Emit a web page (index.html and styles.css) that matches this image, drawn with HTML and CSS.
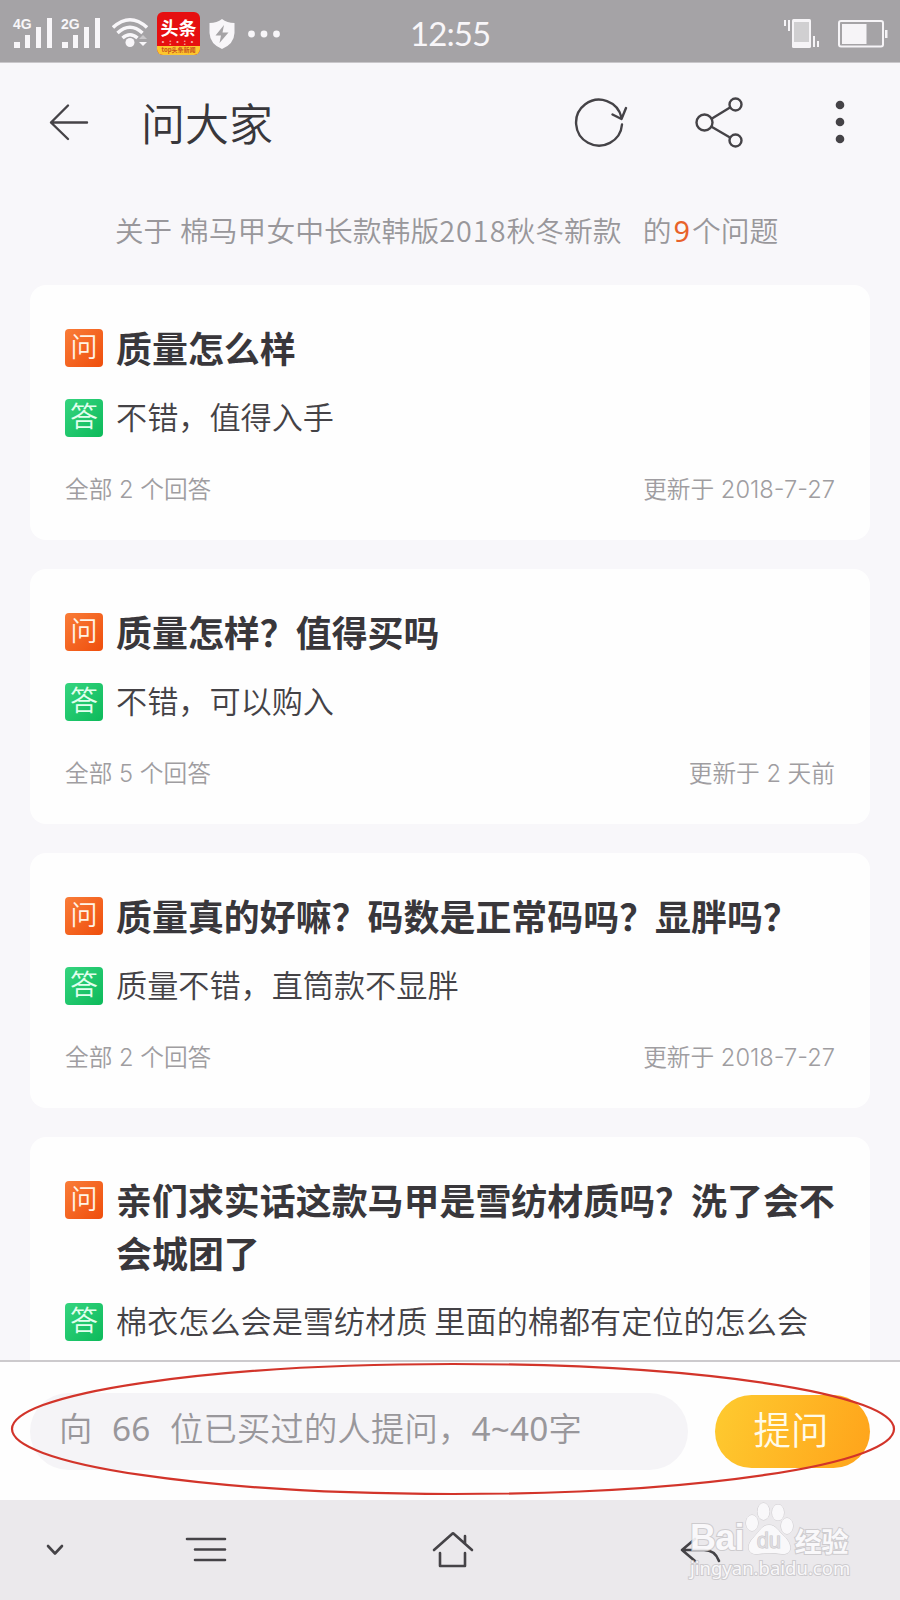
FILE: index.html
```html
<!DOCTYPE html>
<html lang="zh">
<head>
    <meta charset="UTF-8">
    <meta name="viewport" content="width=device-width, initial-scale=1.0">
    <title>问大家</title>
    <link rel="stylesheet" href="styles.css">
</head>
<body>
    <div class="phone">
        <!-- 状态栏 -->
        <div class="status-bar">
            <div class="status-left">
                <svg class="signal" width="40" height="34" viewBox="0 0 40 34">
                    <text class="net-type" x="0" y="12">4G</text>
                    <path d="M1 25h6v6H1zM12 18h5v13h-5zM23 10h5v21h-5zM34 1h5v30h-5z"/>
                </svg>
                <svg class="signal" width="40" height="34" viewBox="0 0 40 34">
                    <text class="net-type" x="0" y="12">2G</text>
                    <path d="M1 25h6v6H1zM12 18h5v13h-5zM23 10h5v21h-5zM34 1h5v30h-5z"/>
                </svg>
                <svg class="wifi" width="36" height="34" viewBox="0 0 36 34">
                    <path d="M1 10.500Q18-5 35 10.500M5.500 16Q18 4.500 30.500 16M10.500 21Q18 14.500 25.500 21"/>
                    <circle cx="18" cy="25.500" r="4.500"/>
                    <path class="wifi-up" d="M27 22l4-4 4 4z"/>
                    <path class="wifi-down" d="M27 25h8l-4 4z"/>
                </svg>
                <div class="app-icon">
                    <div class="app-name">头条</div>
                    <div class="app-dots">·:·:·</div>
                    <div class="app-ribbon">top头条新闻</div>
                </div>
                <svg class="shield" width="26" height="32" viewBox="0 0 26 32">
                    <path class="shield-body" d="M13 1Q18 5 25.500 5V15Q25 26 13 31Q1 26 .5 15V5Q8 5 13 1z"/>
                    <path class="shield-bolt" d="M15 7L6.500 17.500H12L10.500 25L19.500 14.500H13.500z"/>
                </svg>
                <svg class="more" width="32" height="8" viewBox="0 0 32 8">
                    <circle cx="3.500" cy="4" r="3.400"/>
                    <circle cx="16" cy="4" r="3.400"/>
                    <circle cx="28.500" cy="4" r="3.400"/>
                </svg>
            </div>
            <div class="time">12:55</div>
            <div class="status-right">
                <svg width="38" height="30" viewBox="0 0 38 30">
                    <path fill="#f6f4f7" d="M1 1h2v6H1zM5 1h2v11H5zM30 17h2v11h-2zM34 22h2v6h-2z"/>
                    <rect x="9" y="0" width="19" height="29" rx="1.500" fill="#f6f4f7"/>
                    <rect x="11" y="3" width="15" height="20" fill="#d0cfd1"/>
                </svg>
                <svg width="50" height="28" viewBox="0 0 50 28">
                    <rect x="1" y="1" width="44" height="25.500" rx="2" fill="none" stroke="#f6f4f7" stroke-width="2"/>
                    <path fill="#f6f4f7" d="M4 4h24.500v20H4zM47 10h2.500v8H47z"/>
                </svg>
            </div>
        </div>

        <!-- 顶部导航 -->
        <div class="header">
            <svg class="back" width="40" height="40" viewBox="0 0 40 40">
                <path d="M19 3.500L2 20.500L19 37M2 20.500H38"/>
            </svg>
            <h1>问大家</h1>
            <svg class="refresh" width="54" height="52" viewBox="0 0 54 52">
                <path d="M48 28.500A23 23 0 1 1 47.500 21.500M38.500 18.500L47.500 23L52 12"/>
            </svg>
            <svg class="share" width="48" height="52" viewBox="0 0 48 52">
                <circle cx="9.500" cy="26.500" r="8"/>
                <circle cx="40.500" cy="8.500" r="6"/>
                <circle cx="40.500" cy="44.500" r="6"/>
                <path d="M17 22.500L35 11.500M17 31L35 41.500"/>
            </svg>
            <svg class="menu" width="10" height="44" viewBox="0 0 10 44">
                <circle cx="5" cy="5" r="4.300"/>
                <circle cx="5" cy="22" r="4.300"/>
                <circle cx="5" cy="39" r="4.300"/>
            </svg>
        </div>

        <!-- 问题列表 -->
        <div class="content">
            <div class="summary">
                <span class="about">关于</span>
                <span class="product">棉马甲女中长款韩版<span class="year">2018</span>秋冬新款</span>
                <span class="total">的<b>9</b>个问题</span>
            </div>

            <div class="card">
                <div class="question"><span class="tag ask">问</span><h2>质量怎么样</h2></div>
                <div class="answer"><span class="tag reply">答</span><p>不错，值得入手</p></div>
                <div class="meta"><span>全部 2 个回答</span><span>更新于 2018-7-27</span></div>
            </div>

            <div class="card">
                <div class="question"><span class="tag ask">问</span><h2>质量怎样？值得买吗</h2></div>
                <div class="answer"><span class="tag reply">答</span><p>不错，可以购入</p></div>
                <div class="meta"><span>全部 5 个回答</span><span>更新于 2 天前</span></div>
            </div>

            <div class="card">
                <div class="question"><span class="tag ask">问</span><h2>质量真的好嘛？码数是正常码吗？显胖吗？</h2></div>
                <div class="answer"><span class="tag reply">答</span><p>质量不错，直筒款不显胖</p></div>
                <div class="meta"><span>全部 2 个回答</span><span>更新于 2018-7-27</span></div>
            </div>

            <div class="card">
                <div class="question"><span class="tag ask">问</span><h2>亲们求实话这款马甲是雪纺材质吗？洗了会不会城团了</h2></div>
                <div class="answer"><span class="tag reply">答</span><p>棉衣怎么会是雪纺材质 里面的棉都有定位的怎么会</p></div>
            </div>
        </div>

        <!-- 提问栏 -->
        <div class="ask-bar">
            <div class="ask-input">向<span class="num buyers">66</span>位已买过的人提问，<span class="num">4~40</span>字</div>
            <button class="ask-btn">提问</button>
            <svg class="highlight" width="900" height="140" viewBox="0 0 900 140">
                <ellipse cx="453" cy="69" rx="441" ry="65"/>
            </svg>
        </div>

        <!-- 系统导航键 -->
        <div class="nav-bar">
            <svg class="nav-down" width="18" height="12" viewBox="0 0 18 12">
                <path d="M2 2L9 9.500L16 2"/>
            </svg>
            <svg class="nav-menu" width="42" height="28" viewBox="0 0 42 28">
                <path d="M2 3H40M10 13.500H40M10 24H40"/>
            </svg>
            <svg class="nav-home" width="44" height="40" viewBox="0 0 44 40">
                <path d="M3 20L21 4Q22 3 23 4L41 20M34 13V6M9 23V36H34V23"/>
            </svg>
            <svg class="nav-back" width="44" height="28" viewBox="0 0 44 28">
                <path d="M16 3L3 14L16 25M3 14H25Q36 14 40 25"/>
            </svg>
            <div class="watermark">
                <div class="wm-top">
                    <span class="wm-bai">Bai</span>
                    <div class="paw">
                        <svg width="50" height="54" viewBox="0 0 50 54">
                            <ellipse cx="7" cy="21" rx="6" ry="8"/>
                            <ellipse cx="18.500" cy="9.500" rx="6" ry="8.500"/>
                            <ellipse cx="33" cy="10.500" rx="6" ry="8"/>
                            <ellipse cx="42" cy="24" rx="6" ry="8"/>
                            <path d="M24 23C31 23 33 29 39 34C49 44 46 53 37 52Q25 50 13 52C3 53 0 44 9 35C15 29 17 23 24 23z"/>
                        </svg>
                        <span>du</span>
                    </div>
                    <span class="wm-jy">经验</span>
                </div>
                <div class="wm-url">jingyan.baidu.com</div>
            </div>
        </div>
    </div>
</body>
</html>
```

FILE: styles.css
```css
* {
    box-sizing: border-box;
    margin: 0;
    padding: 0;
}

body {
    font-family: 'Noto Sans CJK SC', sans-serif;
    font-weight: 350;
    color: #39373b;
    background: #f8f7fa;
}

svg {
    display: block;
    flex: none;
}

.phone {
    width: 900px;
    height: 1600px;
    display: flex;
    flex-direction: column;
    overflow: hidden;
}

/* 状态栏 */
.status-bar {
    flex: none;
    height: 63px;
    background: #a5a3a6;
    border-bottom: 1px solid #c9c7ca;
    display: grid;
    grid-template-columns: 410px 1fr auto;
    padding-right: 12px;
    color: #f8f6f9;
}

.status-left {
    display: flex;
    align-items: center;
    padding-left: 13px;
}

.signal {
    fill: #f8f6f9;
    margin-right: 8px;
    overflow: visible;
}

.net-type {
    font-family: 'Liberation Sans', sans-serif;
    font-size: 14px;
    font-weight: bold;
}

.wifi {
    margin-left: 3px;
    margin-right: 9px;
    fill: #f8f6f9;
}

.wifi path:first-child {
    fill: none;
    stroke: #f8f6f9;
    stroke-width: 3.5;
}

.wifi .wifi-up {
    fill: #c9c7ca;
}

.app-icon {
    width: 43px;
    height: 43px;
    border-radius: 6px;
    background: #e60f10;
    overflow: hidden;
    text-align: center;
}

.app-name {
    height: 26px;
    line-height: 30px;
    font-size: 18px;
    font-weight: 700;
    color: #fff;
}

.app-dots {
    height: 8px;
    line-height: 8px;
    font-size: 8px;
    font-weight: bold;
    letter-spacing: 2px;
    color: #f8b0a8;
}

.app-ribbon {
    height: 9px;
    line-height: 8px;
    font-size: 6px;
    font-weight: bold;
    background: #fcc72f;
    color: #c8501c;
    white-space: nowrap;
}

.shield {
    margin-left: 9px;
}

.shield-body {
    fill: #f8f6f9;
}

.shield-bolt {
    fill: #a5a3a6;
}

.more {
    margin-left: 13px;
    fill: #f8f6f9;
}

.time {
    font-family: 'Lato', sans-serif;
    font-weight: 400;
    font-size: 33px;
    line-height: 67px;
    letter-spacing: -0.9px;
}

.status-right {
    display: flex;
    align-items: center;
    gap: 17px;
}

/* 顶部导航 */
.header {
    flex: none;
    height: 119px;
    display: flex;
    align-items: center;
    padding: 0 55px 2px 49px;
}

.header svg {
    fill: none;
    stroke: #454347;
    stroke-width: 2.4;
    stroke-linecap: round;
    stroke-linejoin: round;
}

.header h1 {
    margin-left: 52px;
    font-size: 44px;
    font-weight: 350;
    line-height: 60px;
    flex: 1;
}

.header .share {
    margin-left: 67px;
}

.header .menu {
    margin-left: 92px;
    fill: #454347;
    stroke: none;
}

/* 问题列表 */
.content {
    flex: 1;
    min-height: 0;
    overflow: hidden;
    padding: 0 30px;
}

.summary {
    height: 102.5px;
    padding-left: 85px;
    display: flex;
    line-height: 96px;
    font-size: 28.8px;
    color: #99979b;
    white-space: nowrap;
}

.about {
    margin-right: 8px;
    font-size: 28.5px;
}

.product {
    margin-right: 21px;
}

.year {
    letter-spacing: 1px;
}

.summary b {
    font-family: 'Noto Sans', sans-serif;
    font-weight: 400;
    color: #e8622a;
    margin: 0 2px;
}

.card {
    height: 255px;
    margin-bottom: 29px;
    padding: 36.5px 35px 0;
    background: #fefefe;
    border-radius: 16px;
}

.question,
.answer {
    display: flex;
    align-items: flex-start;
}

.tag {
    flex: none;
    width: 38px;
    height: 38px;
    margin-right: 13px;
    border-radius: 4px;
    text-align: center;
    color: #fff4e6;
}

.ask {
    margin-top: 8px;
    font-size: 27px;
    line-height: 34px;
    background: linear-gradient(135deg, #f97c38, #ef4e0c);
}

.reply {
    margin-top: 5px;
    font-size: 28px;
    line-height: 33px;
    color: #e2ffee;
    background: linear-gradient(135deg, #35d47f, #0cba5a);
}

.question h2 {
    font-size: 35.95px;
    font-weight: 700;
    line-height: 52.5px;
    white-space: normal;
    margin-right: -10px;
}

.answer {
    margin-top: 20px;
}

.answer p {
    font-size: 31.15px;
    line-height: 44px;
    white-space: nowrap;
    color: #444246;
}

.meta {
    margin-top: 35.5px;
    display: flex;
    justify-content: space-between;
    font-family: 'Inter', 'Noto Sans CJK SC', sans-serif;
    font-size: 23.7px;
    font-weight: 350;
    line-height: 34px;
    color: #9f9da1;
}

/* 提问栏 */
.ask-bar {
    position: relative;
    flex: none;
    height: 140px;
    border-top: 2px solid #cccacd;
    background: #fefefe;
    display: flex;
    align-items: center;
    padding: 0 30px;
}

.ask-input {
    width: 658px;
    height: 77px;
    border-radius: 39px;
    background: #f5f4f7;
    padding-left: 29px;
    font-family: 'Noto Sans', 'Noto Sans CJK SC', sans-serif;
    font-size: 33.3px;
    letter-spacing: 0.2px;
    line-height: 71px;
    color: #99979b;
    white-space: nowrap;
}

.num {
    font-weight: 400;
}

.buyers {
    margin: 0 19.5px;
}

.ask-btn {
    width: 155px;
    height: 73px;
    margin-left: 27px;
    padding: 0 3px 6px 0;
    border: none;
    border-radius: 37px;
    background: linear-gradient(110deg, #fecb30, #ffa31a);
    font-family: inherit;
    font-weight: 350;
    font-size: 37.5px;
    line-height: 60px;
    color: #fffbe8;
}

/* 红色圈注 */
.highlight {
    position: absolute;
    left: 0;
    top: -2px;
}

.highlight ellipse {
    fill: none;
    stroke: #d2342a;
    stroke-width: 2.2;
}

/* 系统导航键 */
.nav-bar {
    position: relative;
    flex: none;
    height: 100px;
    background: #ebe9ec;
    display: flex;
    align-items: center;
    padding-left: 46px;
}

.nav-bar > svg {
    fill: none;
    stroke: #454347;
    stroke-width: 2.6;
    stroke-linecap: round;
    stroke-linejoin: round;
}

.nav-menu {
    margin-left: 121px;
}

.nav-home {
    margin-left: 204px;
}

.nav-back {
    margin-left: 204px;
}

.watermark {
    position: absolute;
    left: 690px;
    top: 2px;
    width: 165px;
    color: #fbfafc;
    -webkit-text-stroke: 2px #cac8cb;
    paint-order: stroke fill;
    opacity: 0.9;
}

.wm-top {
    display: flex;
    align-items: flex-end;
    height: 54px;
}

.wm-bai {
    font-family: 'Liberation Sans', sans-serif;
    font-size: 36px;
    font-weight: bold;
    line-height: 36px;
    letter-spacing: -0.8px;
}

.paw {
    position: relative;
    margin-left: 1px;
}

.paw svg {
    fill: #fbfafc;
    stroke: #cac8cb;
    stroke-width: 1;
}

.paw span {
    position: absolute;
    left: 12px;
    top: 27px;
    font-family: 'Liberation Sans', sans-serif;
    font-size: 22px;
    line-height: 24px;
    color: #dddbde;
    -webkit-text-stroke: 1px #c5c3c6;
}

.wm-jy {
    font-size: 27px;
    font-weight: bold;
    line-height: 30px;
}

.wm-url {
    font-family: 'Noto Sans', sans-serif;
    font-weight: 400;
    font-size: 18.5px;
    line-height: 24px;
    white-space: nowrap;
}
```
